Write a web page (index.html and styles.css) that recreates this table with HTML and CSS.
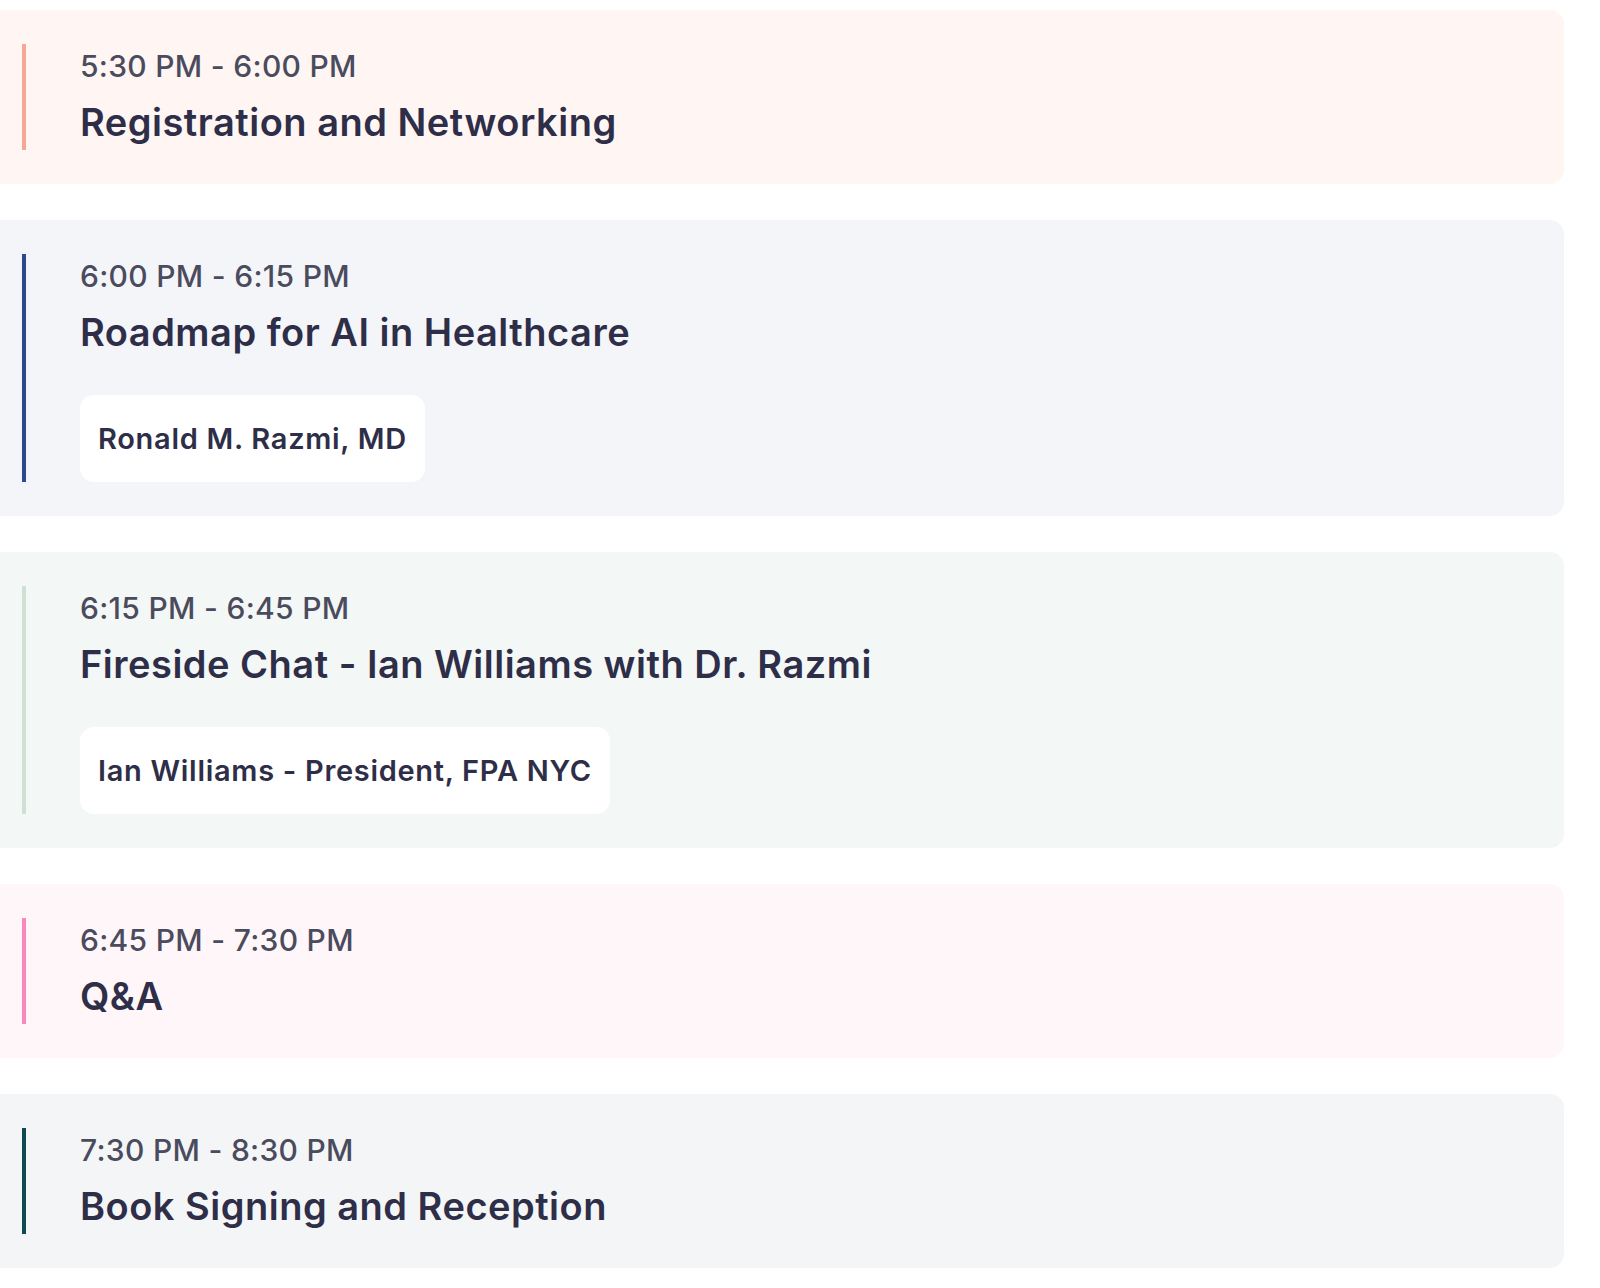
FILE: index.html
```html
<!DOCTYPE html>
<html lang="en">
<head>
<meta charset="utf-8">
<title>Agenda</title>
<link rel="stylesheet" href="styles.css">
</head>
<body>
<main class="agenda">
  <section class="slot slot-peach">
    <div class="slot-body">
      <div class="slot-time">5:30 PM - 6:00 PM</div>
      <h2 class="slot-title">Registration and Networking</h2>
    </div>
  </section>
  <section class="slot slot-navy">
    <div class="slot-body">
      <div class="slot-time">6:00 PM - 6:15 PM</div>
      <h2 class="slot-title">Roadmap for AI in Healthcare</h2>
      <div class="speakers"><span class="speaker">Ronald M. Razmi, MD</span></div>
    </div>
  </section>
  <section class="slot slot-sage">
    <div class="slot-body">
      <div class="slot-time">6:15 PM - 6:45 PM</div>
      <h2 class="slot-title">Fireside Chat - Ian Williams with Dr. Razmi</h2>
      <div class="speakers"><span class="speaker">Ian Williams - President, FPA NYC</span></div>
    </div>
  </section>
  <section class="slot slot-pink">
    <div class="slot-body">
      <div class="slot-time">6:45 PM - 7:30 PM</div>
      <h2 class="slot-title">Q&amp;A</h2>
    </div>
  </section>
  <section class="slot slot-teal">
    <div class="slot-body">
      <div class="slot-time">7:30 PM - 8:30 PM</div>
      <h2 class="slot-title">Book Signing and Reception</h2>
    </div>
  </section>
</main>
</body>
</html>
```
FILE: styles.css
```css
* { box-sizing: border-box; }
html, body { margin: 0; padding: 0; background: #ffffff; }
body {
  font-family: Inter, "Noto Sans", "Liberation Sans", sans-serif;
  color: #2e2e48;
}
.agenda {
  display: flex;
  flex-direction: column;
  gap: 36px;
  padding: 10px 36px 20px 0;
}
.slot {
  margin-left: -20px;
  padding: 34px 0 34px 42px;
  border-radius: 14px;
}
.slot-body {
  border-left: 4px solid #000;
  padding-left: 54px;
  display: flex;
  flex-direction: column;
  align-items: flex-start;
}
.slot-time {
  font-size: 30px;
  line-height: 44px;
  font-weight: 500;
  letter-spacing: 0.3px;
  color: #4b4b5e;
}
.slot-title {
  margin: 12px 0 0;
  padding-bottom: 6px;
  font-size: 38px;
  line-height: 44px;
  font-weight: 600;
  letter-spacing: 0.5px;
  color: #2e2e48;
}
.speakers {
  margin-top: 35px;
  display: flex;
  gap: 16px;
}
.speaker {
  display: flex;
  align-items: center;
  height: 87px;
  padding: 0 18px;
  background: #ffffff;
  border-radius: 14px;
  font-size: 29px;
  font-weight: 600;
  letter-spacing: 0.7px;
  color: #2e2e48;
}
.slot-peach { background: #fff5f3; }
.slot-peach .slot-body { border-left-color: #f5a895; }
.slot-navy { background: #f4f5f9; }
.slot-navy .slot-body { border-left-color: #2b4a8b; }
.slot-sage { background: #f3f7f5; }
.slot-sage .slot-body { border-left-color: #cfdfd5; }
.slot-pink { background: #fff6f9; }
.slot-pink .slot-body { border-left-color: #f68bbb; }
.slot-teal { background: #f4f5f7; }
.slot-teal .slot-body { border-left-color: #0e4a52; }
```
